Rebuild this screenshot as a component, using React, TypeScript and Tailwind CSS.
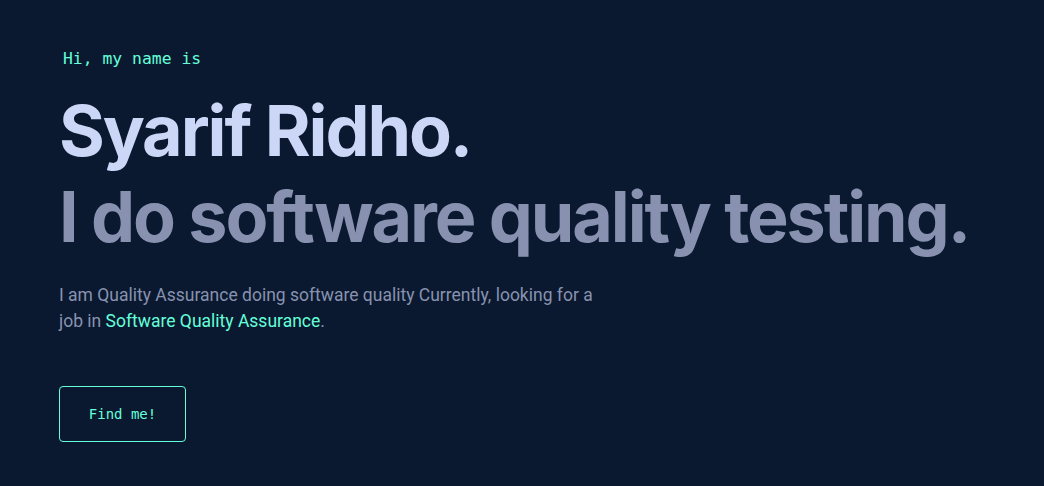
export default function App() {
  return (
    <main className="min-h-[486px] w-full bg-[#0a192f] px-[59px] pt-[46px]">
      <section className="flex flex-col items-start">
        <p className="ml-1 font-['DejaVu_Sans_Mono',monospace] text-[16.4px] leading-[26px] text-[#64ffda]">
          Hi, my name is
        </p>
        <h1 className="mt-[16px] font-['Inter',sans-serif] text-[70px] font-bold leading-[86px] tracking-[-0.03em] text-[#ccd6f6]">
          Syarif Ridho.
        </h1>
        <h2 className="font-['Inter',sans-serif] text-[70px] font-bold leading-[86px] tracking-[-0.03em] text-[#8892b0]">
          I do software quality testing.
        </h2>
        <p className="mt-[22px] max-w-[560px] font-['Roboto',sans-serif] text-[17.5px] leading-[26px] text-[#8892b0]">
          I am Quality Assurance doing software quality Currently, looking for a
          job in <span className="text-[#64ffda]">Software Quality Assurance</span>.
        </p>
        <a
          href="#contact"
          className="mt-[52px] flex h-[56px] w-[127px] items-center justify-center rounded-[4px] border border-[#64ffda] font-['DejaVu_Sans_Mono',monospace] text-[14px] text-[#64ffda]"
        >
          Find me!
        </a>
      </section>
    </main>
  );
}
